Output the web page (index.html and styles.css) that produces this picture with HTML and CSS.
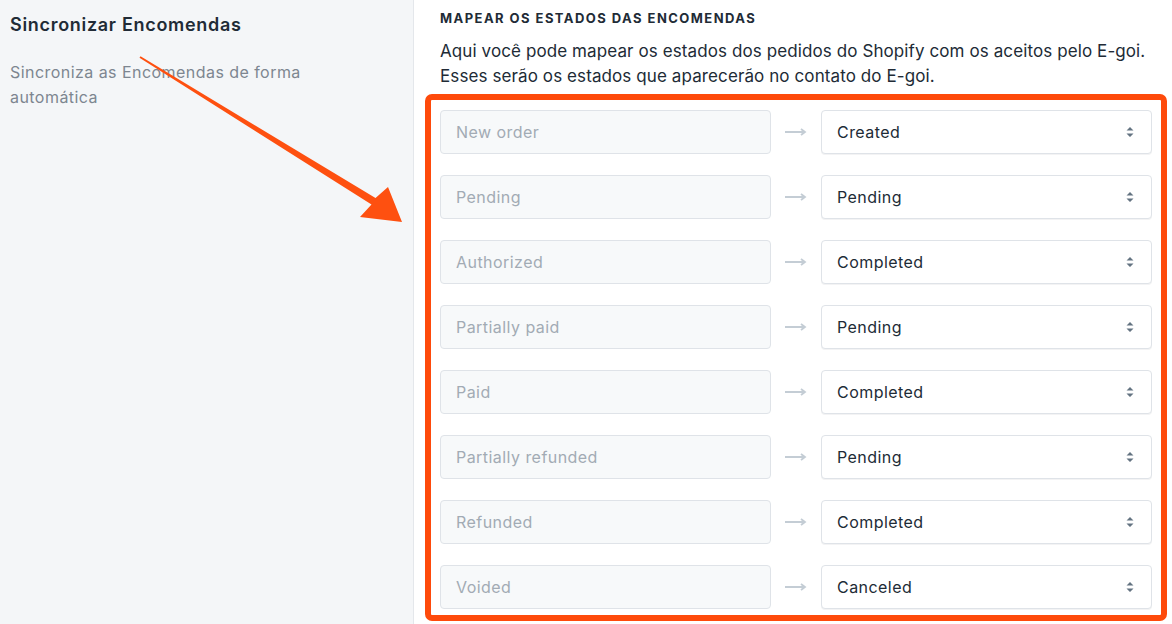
FILE: index.html
```html
<!DOCTYPE html>
<html lang="pt">
<head>
  <meta charset="UTF-8" />
  <meta name="viewport" content="width=device-width, initial-scale=1.0"/>
  <title>Sincronizar Encomendas | E-goi</title>
  <link rel="stylesheet" href="styles.css">
</head>
<body>

  <aside class="sidebar">
    <h2>Sincronizar Encomendas</h2>
    <p>Sincroniza as Encomendas de forma automática</p>
  </aside>

  <main class="content">
    <h3>Mapear os estados das encomendas</h3>
    <p class="intro">Aqui você pode mapear os estados dos pedidos do Shopify com os aceitos pelo E-goi.<br>Esses serão os estados que aparecerão no contato do E-goi.</p>

    <div class="mapping" id="mapping">
      <!-- rows are built by the script below -->
    </div>
  </main>

  <!-- annotation arrow drawn over the page -->
  <svg class="pointer" width="1172" height="624" viewBox="0 0 1172 624">
    <polygon points="139.5,57.8 140.5,56.2 375.5,198 388,187 402,222 360,217 371.5,204.5" fill="#fe5010"/>
  </svg>

  <script>
    const states = [
      ['New order', 'Created'],
      ['Pending', 'Pending'],
      ['Authorized', 'Completed'],
      ['Partially paid', 'Pending'],
      ['Paid', 'Completed'],
      ['Partially refunded', 'Pending'],
      ['Refunded', 'Completed'],
      ['Voided', 'Canceled']
    ];
    const options = ['Created', 'Pending', 'Completed', 'Canceled'];
    const mapping = document.getElementById('mapping');

    states.forEach(([shopify, egoi]) => {
      const row = document.createElement('div');
      row.className = 'row';

      const input = document.createElement('input');
      input.className = 'field';
      input.placeholder = shopify;
      input.disabled = true;
      row.appendChild(input);

      row.insertAdjacentHTML('beforeend',
        '<svg class="arrow" width="24" height="10" viewBox="0 0 24 10"><path d="M1 5h20M17 2l4 3-4 3" fill="none" stroke="#c4cdd5" stroke-width="1.8"/></svg>');

      const wrap = document.createElement('div');
      wrap.className = 'select-wrap';
      const select = document.createElement('select');
      options.forEach(o => {
        const opt = document.createElement('option');
        opt.textContent = o;
        if (o === egoi) opt.selected = true;
        select.appendChild(opt);
      });
      wrap.appendChild(select);
      wrap.insertAdjacentHTML('beforeend',
        '<svg class="chevrons" width="8" height="14" viewBox="0 0 8 14"><path d="M4 2L7.5 5.5H0.5z M4 12L0.5 8.5h7z" fill="#637381"/></svg>');
      row.appendChild(wrap);

      mapping.appendChild(row);
    });
  </script>

</body>
</html>
```

FILE: styles.css
```css
body {
  font-family: Inter, "Noto Sans", sans-serif;
  margin: 0;
  display: flex;
  min-height: 624px;
  background: #fff;
  color: #212b36;
}

.sidebar {
  width: 414px;
  flex-shrink: 0;
  background: #f4f6f8;
  border-right: 1px solid #e4e7eb;
  padding: 13px 10px;
  box-sizing: border-box;
}

.sidebar h2 {
  margin: 0;
  font-size: 18px;
  font-weight: 600;
  line-height: 24px;
  letter-spacing: 0.7px;
  color: #212b36;
}

.sidebar p {
  margin: 23px 0 0;
  font-size: 16px;
  line-height: 25px;
  letter-spacing: 0.45px;
  color: #7d8690;
  width: 330px;
}

.content {
  flex: 1;
  padding: 10px 5px 0 11px;
}

.content h3 {
  margin: 0 0 0 15px;
  font-size: 13px;
  font-weight: 700;
  line-height: 16px;
  text-transform: uppercase;
  letter-spacing: 1.45px;
  color: #212b36;
}

.intro {
  margin: 13px 0 5px 15px;
  font-size: 17px;
  line-height: 25px;
  letter-spacing: 0.1px;
  color: #212b36;
}

.mapping {
  border: 6px solid #fe4a0b;
  border-radius: 7px;
  padding: 10px 8px 6px 9px;
  display: flex;
  flex-direction: column;
  gap: 21px;
}

.row {
  display: flex;
  align-items: center;
}

.field,
.select-wrap select {
  width: 331px;
  height: 44px;
  box-sizing: border-box;
  border: 1px solid #dfe3e8;
  border-radius: 4px;
  font-family: inherit;
  font-size: 16px;
  letter-spacing: 0.45px;
  padding: 0 15px;
}

.field {
  background: #f7f9fa;
}

.field::placeholder {
  color: #a2abb4;
}

.arrow {
  margin: 0 13px 0 13px;
}

.select-wrap {
  position: relative;
}

.select-wrap select {
  appearance: none;
  background: #fff;
  color: #212b36;
  box-shadow: 0 1px 0 rgba(22, 29, 37, 0.05);
}

.chevrons {
  position: absolute;
  right: 18px;
  top: 15px;
  pointer-events: none;
}

.pointer {
  position: absolute;
  left: 0;
  top: 0;
  pointer-events: none;
}
```
